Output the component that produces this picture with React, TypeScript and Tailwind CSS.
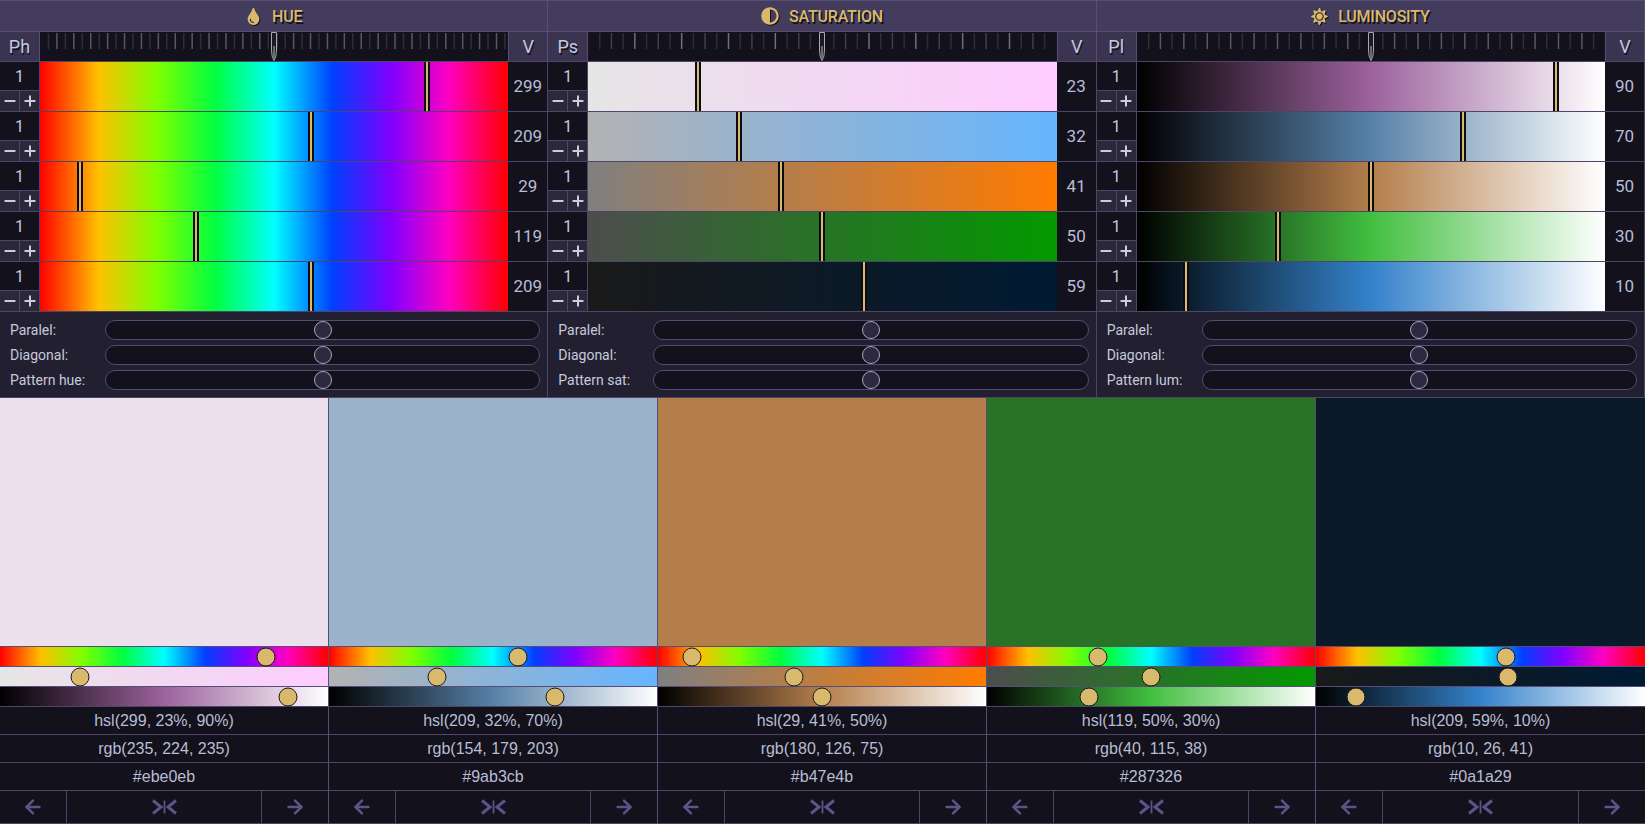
import React from "react";
import { ArrowLeft, ArrowRight, Minus, Plus } from "lucide-react";
import { FaTint, FaAdjust, FaSun } from "react-icons/fa";

const colors = [
  { h: 299, s: 23, l: 90, rgb: "rgb(235, 224, 235)", hex: "#ebe0eb" },
  { h: 209, s: 32, l: 70, rgb: "rgb(154, 179, 203)", hex: "#9ab3cb" },
  { h: 29, s: 41, l: 50, rgb: "rgb(180, 126, 75)", hex: "#b47e4b" },
  { h: 119, s: 50, l: 30, rgb: "rgb(40, 115, 38)", hex: "#287326" },
  { h: 209, s: 59, l: 10, rgb: "rgb(10, 26, 41)", hex: "#0a1a29" },
];

const rainbow =
  "linear-gradient(to right,#ff0000,#ffc000 12.5%,#80ff00 25%,#00ff40 37.5%,#00ffff 50%,#0040ff 62.5%,#8000ff 75%,#ff00c0 87.5%,#ff0000)";

type C = (typeof colors)[number];
const satG = (c: C) => `linear-gradient(to right,hsl(${c.h},0%,${c.l}%),hsl(${c.h},100%,${c.l}%))`;
const lumG = (c: C) => `linear-gradient(to right,#000,hsl(${c.h},${c.s}%,50%),#fff)`;

function Ruler({ count, period }: { count: number; period: number }) {
  const step = 469 / count;
  const ticks: React.ReactNode[] = [];
  for (let i = 1; i < count; i++) {
    const m = i % period;
    const op = period === 2 ? (m === 0 ? 0.3 : 0.13) : m === 0 ? 0.4 : m === 2 ? 0.2 : 0.12;
    ticks.push(
      <line key={i} x1={i * step} x2={i * step} y1={1} y2={17} stroke="#fff" strokeOpacity={op} strokeWidth={1.5} />
    );
  }
  return (
    <div className="relative flex-1 min-w-0 h-full bg-[#12111c]">
      <svg className="block w-full h-full" viewBox="0 0 469 29" preserveAspectRatio="none">
        {ticks}
      </svg>
      <svg className="absolute top-0 left-1/2 -translate-x-1/2" width="7" height="29" viewBox="0 0 7 29">
        <path d="M1 .5H6V18Q6 25 3.5 28.5 1 25 1 18Z" fill="#1b1a26" stroke="#a9a9a9" strokeWidth="1" />
        <path d="M3.5 14V26" stroke="#6a6a72" strokeWidth="2" />
      </svg>
    </div>
  );
}

function Row({ value, max, bg }: { value: number; max: number; bg: string }) {
  return (
    <div className="flex h-[50px] border-b border-[#4d4669]">
      <div className="flex flex-col w-[40px] shrink-0 border-r border-[#4d4669] bg-[#12111c]">
        <div className="h-[28px] pt-[2px] flex items-center justify-center text-[16px] text-[#c5c9e0]">1</div>
        <div className="flex flex-1 border-t border-[#4d4669] bg-[#2a2839] text-[#c9cde2]">
          <div className="flex-1 flex items-center justify-center border-r border-[#4d4669]">
            <Minus size={16} strokeWidth={3} />
          </div>
          <div className="flex-1 flex items-center justify-center">
            <Plus size={16} strokeWidth={3} />
          </div>
        </div>
      </div>
      <div className="relative flex-1 min-w-0" style={{ background: bg }}>
        <div
          className="absolute top-0 bottom-0 flex justify-center w-[6px] bg-[#0d0c12]"
          style={{ left: `calc((100% - 6px) * ${value / max})` }}
        >
          <div className="w-[2px] h-full bg-[#d9b96b]" />
        </div>
      </div>
      <div className="w-[40px] shrink-0 flex items-center justify-center border-r border-[#4d4669] bg-[#12111c] text-[17px] text-[#b9bdd6]">
        {value}
      </div>
    </div>
  );
}

function Slider({ label }: { label: string }) {
  return (
    <div className="flex items-center h-[20px]">
      <div className="w-[105px] shrink-0 pl-[10px] text-[14px] leading-[18px] text-[#c8cadb]">{label}</div>
      <div className="relative flex-1 h-[20px] rounded-full border border-[#534b74] bg-[#12111c]">
        <div className="absolute top-1/2 left-1/2 -translate-x-1/2 -translate-y-1/2 w-[18px] h-[18px] rounded-full bg-[#2d2a3f] border-[1.5px] border-[#a8a6c4]" />
      </div>
    </div>
  );
}

function Panel({
  title,
  icon,
  code,
  count,
  period,
  rows,
  labels,
}: {
  title: string;
  icon: React.ReactNode;
  code: string;
  count: number;
  period: number;
  rows: { value: number; max: number; bg: string }[];
  labels: string[];
}) {
  return (
    <div className="flex flex-col min-w-0">
      <div className="h-[32px] flex items-center justify-center gap-[10px] border-y border-r border-[#564e78] bg-[#433c5c] text-[#d9b96b] text-[16px] font-medium tracking-[-0.2px] [text-shadow:1.5px_2px_0_#14121f]">
        <span className="drop-shadow-[1.5px_1.5px_0_#14121f]">{icon}</span>
        <span className="pt-[2px]">{title}</span>
      </div>
      <div className="h-[30px] flex border-b border-[#4d4669]">
        <div className="w-[40px] shrink-0 flex items-center justify-center bg-[#3a3450] border-r border-[#564e78] text-[#c5c9e0] text-[18px] [text-shadow:1px_2px_0_#14121f]">
          {code}
        </div>
        <Ruler count={count} period={period} />
        <div className="w-[40px] shrink-0 flex items-center justify-center bg-[#3a3450] border-l border-r border-[#564e78] text-[#c5c9e0] text-[18px] [text-shadow:1px_2px_0_#14121f]">
          V
        </div>
      </div>
      {rows.map((r, i) => (
        <Row key={i} value={r.value} max={r.max} bg={r.bg} />
      ))}
      <div className="h-[86px] flex flex-col gap-[5px] pt-[8px] pr-[7px] bg-[#211f30] border-r border-b border-[#4d4669]">
        {labels.map((l) => (
          <Slider key={l} label={l} />
        ))}
      </div>
    </div>
  );
}

function Bar({ bg, pct }: { bg: string; pct: number }) {
  return (
    <div className="relative h-[20px] border-t border-[#564e78]" style={{ background: bg, backgroundClip: "padding-box" }}>
      <div
        className="absolute top-1/2 w-[19px] h-[19px] -translate-x-1/2 -translate-y-1/2 rounded-full bg-[#d9b96b] border-[1.5px] border-[#1a1820] z-10"
        style={{ left: `calc(9px + (100% - 18px) * ${pct})` }}
      />
    </div>
  );
}

function Swatch({ c, last }: { c: C; last: boolean }) {
  const info = [`hsl(${c.h}, ${c.s}%, ${c.l}%)`, c.rgb, c.hex];
  return (
    <div className={`flex flex-col min-w-0 ${last ? "" : "border-r border-[#564e78]"}`}>
      <div className="h-[248px]" style={{ background: c.hex }} />
      <Bar bg={rainbow} pct={c.h / 360} />
      <Bar bg={satG(c)} pct={c.s / 100} />
      <Bar bg={lumG(c)} pct={c.l / 100} />
      {info.map((t) => (
        <div key={t} className="h-[28px] flex items-center justify-center border-t border-[#4d4669] bg-[#12111c] text-[16px] text-[#b9bdd3] font-['Liberation_Sans',sans-serif]">
          {t}
        </div>
      ))}
      <div className="h-[34px] flex border-t border-b border-[#4d4669] bg-[#12111c] text-[#5d5389]">
        <div className="w-[67px] flex items-center justify-center border-r border-[#4d4669]">
          <ArrowLeft size={22} strokeWidth={2.7} />
        </div>
        <div className="flex-1 flex items-center justify-center border-r border-[#4d4669]">
          <svg width="27" height="16" viewBox="0 0 27 16" fill="none" stroke="currentColor" strokeWidth="3">
            <path d="M2 1.5l8 6.5-8 6.5" />
            <path d="M13.5 1.5v13" strokeWidth="1.8" />
            <path d="M25 1.5l-8 6.5 8 6.5" />
          </svg>
        </div>
        <div className="w-[66px] flex items-center justify-center">
          <ArrowRight size={22} strokeWidth={2.7} />
        </div>
      </div>
    </div>
  );
}

export default function App() {
  return (
    <div className="w-full font-['Roboto',sans-serif]">
      <div className="grid grid-cols-3">
        <Panel
          title="HUE"
          icon={<FaTint size={17} className="block" />}
          code="Ph"
          count={55.4}
          period={2}
          rows={colors.map((c) => ({ value: c.h, max: 360, bg: rainbow }))}
          labels={["Paralel:", "Diagonal:", "Pattern hue:"]}
        />
        <Panel
          title="SATURATION"
          icon={<FaAdjust size={18} className="block" />}
          code="Ps"
          count={40}
          period={4}
          rows={colors.map((c) => ({ value: c.s, max: 100, bg: satG(c) }))}
          labels={["Paralel:", "Diagonal:", "Pattern sat:"]}
        />
        <Panel
          title="LUMINOSITY"
          icon={<FaSun size={17} className="block" />}
          code="Pl"
          count={40}
          period={2}
          rows={colors.map((c) => ({ value: c.l, max: 100, bg: lumG(c) }))}
          labels={["Paralel:", "Diagonal:", "Pattern lum:"]}
        />
      </div>
      <div className="grid grid-cols-5">
        {colors.map((c, i) => (
          <Swatch key={c.hex} c={c} last={i === 4} />
        ))}
      </div>
    </div>
  );
}
